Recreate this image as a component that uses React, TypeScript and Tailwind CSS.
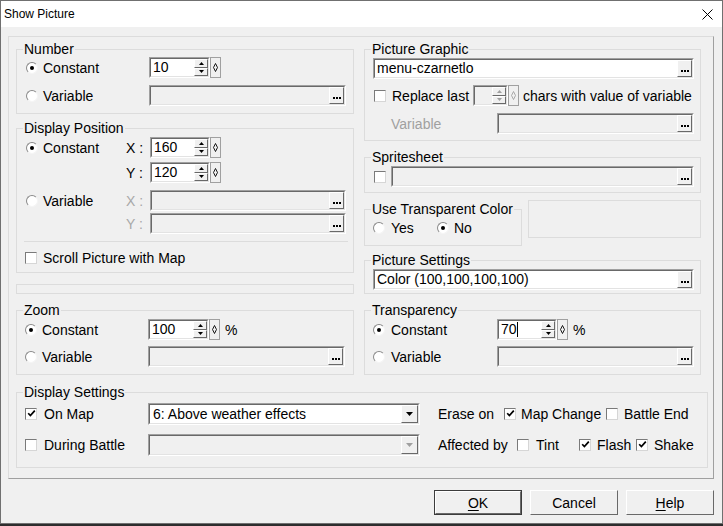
import React from 'react';

function Sunken({
  className = '',
  disabled = false,
  children,
}: {
  className?: string;
  disabled?: boolean;
  children?: React.ReactNode;
}) {
  return (
    <div className={`flex border border-t-[#a0a0a0] border-l-[#a0a0a0] border-r-white border-b-white ${className}`}>
      <div
        className={`flex min-w-0 flex-1 border border-t-[#696969] border-l-[#696969] border-r-[#e3e3e3] border-b-[#e3e3e3] ${
          disabled ? 'bg-[#f0f0f0]' : 'bg-white'
        }`}
      >
        {children}
      </div>
    </div>
  );
}

function Raised({ className = '', children }: { className?: string; children?: React.ReactNode }) {
  return (
    <div
      className={`flex items-center justify-center border border-t-white border-l-white border-r-[#696969] border-b-[#696969] bg-[#f0f0f0] ${className}`}
    >
      {children}
    </div>
  );
}

function Dots() {
  return (
    <Raised className="w-[15px] shrink-0">
      <svg width="8" height="2" viewBox="0 0 8 2" className="mt-[5px]">
        <rect x="0" y="0" width="2" height="2" fill="#000" />
        <rect x="3" y="0" width="2" height="2" fill="#000" />
        <rect x="6" y="0" width="2" height="2" fill="#000" />
      </svg>
    </Raised>
  );
}

function Arrow({ up = false, color = '#000' }: { up?: boolean; color?: string }) {
  return (
    <svg width="5" height="3" viewBox="0 0 5 3">
      <path d={up ? 'M2.5 0 L5 3 L0 3 Z' : 'M0 0 L5 0 L2.5 3 Z'} fill={color} />
    </svg>
  );
}

function SpinBox({
  value = '',
  w,
  disabled = false,
  caret = false,
}: {
  value?: string;
  w: string;
  disabled?: boolean;
  caret?: boolean;
}) {
  const c = disabled ? '#a0a0a0' : '#000';
  return (
    <div className="flex h-[21px] shrink-0">
      <Sunken className={`${w} h-full`} disabled={disabled}>
        <span className="flex flex-1 items-center pl-[2px] leading-[17px]">
          {value}
          {caret && <span className="inline-block h-[15px] w-px bg-black" />}
        </span>
        <div className="flex w-[14px] flex-col">
          <Raised className="flex-1">
            <Arrow up color={c} />
          </Raised>
          <Raised className="flex-1">
            <Arrow color={c} />
          </Raised>
        </div>
      </Sunken>
      <div className="flex w-[11px] items-center justify-center border border-[#a0a0a0] bg-[#f0f0f0]">
        <svg width="5" height="9" viewBox="0 0 5 9">
          <path d="M2.5 0.5 L4.5 4.5 L2.5 8.5 L0.5 4.5 Z" fill="none" stroke={c} strokeWidth="0.9" />
        </svg>
      </div>
    </div>
  );
}

function Field({
  text = '',
  disabled = false,
  className = '',
}: {
  text?: string;
  disabled?: boolean;
  className?: string;
}) {
  return (
    <Sunken className={`h-[21px] ${className}`} disabled={disabled}>
      <span className="flex flex-1 items-center truncate pl-[2px] leading-[17px]">{text}</span>
      <Dots />
    </Sunken>
  );
}

function Select({ text = '', disabled = false }: { text?: string; disabled?: boolean }) {
  return (
    <Sunken className="h-[22px] w-[272px] shrink-0" disabled={disabled}>
      <span className="flex flex-1 items-center pl-[3px] leading-[18px]">{text}</span>
      <Raised className="w-[17px]">
        <svg width="7" height="4" viewBox="0 0 7 4">
          <path d="M0 0 L7 0 L3.5 4 Z" fill={disabled ? '#a0a0a0' : '#000'} />
        </svg>
      </Raised>
    </Sunken>
  );
}

function Radio({ checked = false }: { checked?: boolean }) {
  return (
    <span className="flex h-[12px] w-[12px] shrink-0 items-center justify-center rounded-full border border-t-[#8a8a8a] border-l-[#8a8a8a] border-r-[#f4f4f4] border-b-[#f4f4f4] bg-white">
      {checked && <span className="h-[4px] w-[4px] rounded-full bg-black" />}
    </span>
  );
}

function Check({ checked = false }: { checked?: boolean }) {
  return (
    <span className="flex h-[12px] w-[12px] shrink-0 items-center justify-center border border-t-[#7a7a7a] border-l-[#7a7a7a] border-r-[#d6d6d6] border-b-[#d6d6d6] bg-white">
      {checked && (
        <svg width="9" height="9" viewBox="0 0 9 9">
          <path d="M1.2 4.2 L3.4 6.6 L7.8 1.6" fill="none" stroke="#000" strokeWidth="1.7" />
        </svg>
      )}
    </span>
  );
}

function Group({
  label,
  className = '',
  children,
}: {
  label: string;
  className?: string;
  children?: React.ReactNode;
}) {
  return (
    <fieldset className={`border border-[#dcdcdc] ${className}`}>
      <legend className="ml-[6px] px-px leading-[16px]">{label}</legend>
      {children}
    </fieldset>
  );
}

function PushButton({ children, primary = false }: { children: React.ReactNode; primary?: boolean }) {
  return (
    <div className={`h-[25px] w-[88px] ${primary ? 'border border-[#3c3c3c]' : ''}`}>
      <div className="flex h-full w-full items-center justify-center border border-t-white border-l-white border-r-[#696969] border-b-[#696969] bg-[#f0f0f0]">
        {children}
      </div>
    </div>
  );
}

export default function App() {
  return (
    <div className="h-[526px] w-[723px] bg-[#2d2d2d] font-['Liberation_Sans',Arial,sans-serif] text-[14px] leading-[16px] text-black">
      <div className="flex h-[524px] w-[723px] flex-col border border-[#707070] bg-[#f0f0f0]">
        {/* Title bar */}
        <div className="flex h-[26px] shrink-0 items-center justify-between bg-white pl-[3px] pr-[9px]">
          <span className="text-[12px]">Show Picture</span>
          <svg width="11" height="11" viewBox="0 0 11 11" className="mt-[1px]">
            <path d="M0.5 0.5 L10.5 10.5 M10.5 0.5 L0.5 10.5" stroke="#000" strokeWidth="1" />
          </svg>
        </div>

        <div className="px-[7px] pt-[9px]">
          {/* Panel */}
          <div className="h-[443px] w-[706px] border border-[#dcdcdc] border-r-[#a0a0a0] border-b-[#a0a0a0] pl-[7px] pt-[4px]">
            <div className="flex gap-[10px]">
              {/* Left column */}
              <div className="flex w-[338px] flex-col">
                <Group label="Number">
                  <div className="flex flex-col gap-[7px] pb-[7px]">
                    <div className="flex h-[21px] items-center">
                      <div className="flex w-[132px] items-center pl-[9px]">
                        <Radio checked />
                        <span className="ml-[5px]">Constant</span>
                      </div>
                      <SpinBox value="10" w="w-[61px]" />
                    </div>
                    <div className="flex h-[21px] items-center">
                      <div className="flex w-[132px] items-center pl-[9px]">
                        <Radio />
                        <span className="ml-[5px]">Variable</span>
                      </div>
                      <Field disabled className="w-[197px]" />
                    </div>
                  </div>
                </Group>

                <Group label="Display Position" className="mt-[6px]">
                  <div className="flex flex-col pb-[4px] pt-px">
                    <div className="flex h-[21px] items-center">
                      <div className="flex w-[109px] items-center pl-[9px]">
                        <Radio checked />
                        <span className="ml-[5px]">Constant</span>
                      </div>
                      <span className="w-[24px]">X :</span>
                      <SpinBox value="160" w="w-[60px]" />
                    </div>
                    <div className="mt-[4px] flex h-[21px] items-center">
                      <div className="w-[109px]" />
                      <span className="w-[24px]">Y :</span>
                      <SpinBox value="120" w="w-[60px]" />
                    </div>
                    <div className="mt-[7px] flex h-[21px] items-center">
                      <div className="flex w-[109px] items-center pl-[9px]">
                        <Radio />
                        <span className="ml-[5px]">Variable</span>
                      </div>
                      <span className="w-[24px] text-[#a8a8a8]">X :</span>
                      <Field disabled className="w-[196px]" />
                    </div>
                    <div className="mt-[2px] flex h-[21px] items-center">
                      <div className="w-[109px]" />
                      <span className="w-[24px] text-[#a8a8a8]">Y :</span>
                      <Field disabled className="w-[196px]" />
                    </div>
                    <div className="ml-[7px] mt-[7px] h-px w-[324px] bg-[#dcdcdc]" />
                    <div className="mt-[6px] flex h-[20px] items-center pl-[8px]">
                      <Check />
                      <span className="ml-[6px]">Scroll Picture with Map</span>
                    </div>
                  </div>
                </Group>

                <div className="mt-[11px] h-[10px] border border-[#dcdcdc]" />

                <Group label="Zoom" className="mt-[8px]">
                  <div className="flex flex-col gap-[6px] pb-[7px] pt-px">
                    <div className="flex h-[21px] items-center">
                      <div className="flex w-[131px] items-center pl-[8px]">
                        <Radio checked />
                        <span className="ml-[5px]">Constant</span>
                      </div>
                      <SpinBox value="100" w="w-[61px]" />
                      <span className="ml-[5px]">%</span>
                    </div>
                    <div className="flex h-[21px] items-center">
                      <div className="flex w-[131px] items-center pl-[8px]">
                        <Radio />
                        <span className="ml-[5px]">Variable</span>
                      </div>
                      <Field disabled className="w-[197px]" />
                    </div>
                  </div>
                </Group>
              </div>

              {/* Right column */}
              <div className="flex w-[337px] flex-col">
                <Group label="Picture Graphic">
                  <div className="flex flex-col pb-[6px] pl-[8px] pr-[6px] pt-px">
                    <Field text="menu-czarnetlo" />
                    <div className="mt-[6px] flex h-[21px] items-center">
                      <div className="flex w-[100px] items-center pl-px">
                        <Check />
                        <span className="ml-[6px]">Replace last</span>
                      </div>
                      <SpinBox disabled w="w-[35px]" />
                      <span className="ml-[4px] whitespace-nowrap">chars with value of variable</span>
                    </div>
                    <div className="mt-[7px] flex h-[21px] items-center">
                      <span className="w-[124px] pl-[18px] text-[#a0a0a0]">Variable</span>
                      <Field disabled className="flex-1" />
                    </div>
                  </div>
                </Group>

                <Group label="Spritesheet" className="mt-[8px]">
                  <div className="flex items-center pb-[5px] pl-[9px] pr-[6px] pt-px">
                    <Check />
                    <Field disabled className="ml-[5px] flex-1" />
                  </div>
                </Group>

                <div className="flex items-start">
                  <Group label="Use Transparent Color" className="mt-[8px] w-[158px]">
                    <div className="flex h-[21px] items-center pl-[8px]">
                      <div className="flex w-[64px] items-center">
                        <Radio />
                        <span className="ml-[6px]">Yes</span>
                      </div>
                      <Radio checked />
                      <span className="ml-[5px]">No</span>
                    </div>
                    <div className="h-[7px]" />
                  </Group>
                  <div className="ml-[6px] mt-[7px] h-[38px] w-[173px] border border-[#dcdcdc]" />
                </div>

                <Group label="Picture Settings" className="mt-[6px]">
                  <div className="pb-[3px] pl-[8px] pr-[6px] pt-px">
                    <Field text="Color (100,100,100,100)" />
                  </div>
                </Group>

                <Group label="Transparency" className="mt-[8px]">
                  <div className="flex flex-col gap-[6px] pb-[7px] pt-px">
                    <div className="flex h-[21px] items-center">
                      <div className="flex w-[132px] items-center pl-[8px]">
                        <Radio checked />
                        <span className="ml-[6px]">Constant</span>
                      </div>
                      <SpinBox value="70" caret w="w-[60px]" />
                      <span className="ml-[5px]">%</span>
                    </div>
                    <div className="flex h-[21px] items-center pr-[6px]">
                      <div className="flex w-[132px] items-center pl-[8px]">
                        <Radio />
                        <span className="ml-[6px]">Variable</span>
                      </div>
                      <Field disabled className="flex-1" />
                    </div>
                  </div>
                </Group>
              </div>
            </div>

            <Group label="Display Settings" className="mt-[9px] w-[692px]">
              <div className="flex flex-col gap-[8px] pb-[11px] pt-[2px]">
                <div className="flex h-[23px] items-center">
                  <div className="flex w-[131px] items-center pl-[8px]">
                    <Check checked />
                    <span className="ml-[7px]">On Map</span>
                  </div>
                  <Select text="6: Above weather effects" />
                  <div className="ml-[18px] flex items-center">
                    <span className="w-[66px]">Erase on</span>
                    <Check checked />
                    <span className="ml-[5px] w-[85px]">Map Change</span>
                    <Check />
                    <span className="ml-[6px]">Battle End</span>
                  </div>
                </div>
                <div className="flex h-[23px] items-center">
                  <div className="flex w-[131px] items-center pl-[8px]">
                    <Check />
                    <span className="ml-[7px]">During Battle</span>
                  </div>
                  <Select disabled />
                  <div className="ml-[18px] flex items-center">
                    <span className="w-[79px]">Affected by</span>
                    <Check />
                    <span className="ml-[7px] w-[43px]">Tint</span>
                    <Check checked />
                    <span className="ml-[6px] w-[39px]">Flash</span>
                    <Check checked />
                    <span className="ml-[6px]">Shake</span>
                  </div>
                </div>
              </div>
            </Group>
          </div>

          {/* Buttons */}
          <div className="mt-[11px] flex w-[706px] justify-end gap-[8px]">
            <PushButton primary>
              <span>
                <span className="underline underline-offset-2">O</span>K
              </span>
            </PushButton>
            <PushButton>Cancel</PushButton>
            <PushButton>
              <span>
                <span className="underline underline-offset-2">H</span>elp
              </span>
            </PushButton>
          </div>
        </div>
      </div>
    </div>
  );
}
